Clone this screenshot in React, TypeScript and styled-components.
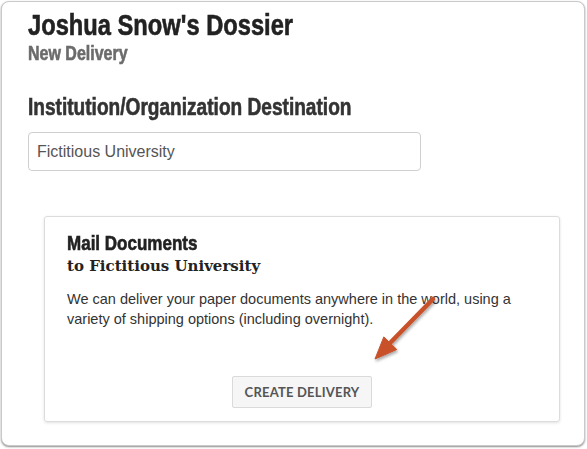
import styled, { createGlobalStyle } from "styled-components";

const Global = createGlobalStyle`
  html, body {
    margin: 0;
    padding: 0;
    background: #ffffff;
  }
  * {
    box-sizing: border-box;
  }
`;

// no condensed gothic installed, so squeeze a bold grotesque
const condensed = `"Liberation Sans", Arial, sans-serif`;

const Page = styled.div`
  padding: 1px 2px 3px 1px;
`;

const Panel = styled.div`
  height: 445px;
  border: 1px solid #c9c9c9;
  border-radius: 8px;
  box-shadow: 0 1px 2px rgba(0, 0, 0, 0.45);
  background: #fff;
  padding: 6px 26px 0 26px;
`;

const Squeezed = styled.div<{ $scale?: number }>`
  font-family: ${condensed};
  font-weight: 700;
  -webkit-text-stroke: 0.6px currentColor;
  transform: scaleX(${(p) => p.$scale ?? 0.8});
  transform-origin: left center;
  white-space: nowrap;
`;

const Title = styled(Squeezed).attrs({ as: "h1" })`
  margin: 0;
  font-size: 30px;
  line-height: 34px;
  color: #222;
`;

const Subtitle = styled(Squeezed).attrs({ as: "h2" })`
  margin: 0;
  font-size: 20px;
  line-height: 22px;
  color: #6b6b6b;
`;

const Label = styled(Squeezed).attrs({ as: "h3" })`
  margin: 30px 0 0;
  font-size: 23px;
  line-height: 26px;
  color: #333;
`;

const Input = styled.input`
  display: block;
  margin-top: 12px;
  width: 393px;
  height: 39px;
  padding: 0 8px;
  border: 1px solid #cfcfcf;
  border-radius: 4px;
  font-family: "Liberation Sans", Arial, sans-serif;
  font-size: 16px;
  color: #555;
  background: #fff;
  outline: none;
`;

const Card = styled.div`
  position: relative;
  margin: 45px 0 0 16px;
  width: 516px;
  height: 206px;
  border: 1px solid #dcdcdc;
  border-radius: 3px;
  box-shadow: 0 1px 3px rgba(0, 0, 0, 0.12);
  padding: 14px 22px 0 22px;
  display: flex;
  flex-direction: column;
`;

const CardTitle = styled(Squeezed)`
  font-size: 21px;
  line-height: 24px;
  color: #222;
`;

const CardSub = styled.div`
  font-family: "DejaVu Serif", "Liberation Serif", serif;
  font-weight: 700;
  font-size: 15px;
  line-height: 22px;
  color: #222;
`;

const Body = styled.p`
  margin: 12px 0 0;
  font-family: "Liberation Sans", Arial, sans-serif;
  font-size: 14.5px;
  line-height: 20px;
  color: #333;
`;

const Actions = styled.div`
  margin-top: auto;
  padding-bottom: 13px;
  display: flex;
  justify-content: center;
`;

const Button = styled.button`
  width: 140px;
  height: 32px;
  border: 1px solid #dadada;
  border-radius: 2px;
  background: #f6f6f6;
  font-family: Lato, "Open Sans", sans-serif;
  font-weight: 700;
  font-size: 13px;
  letter-spacing: 0.2px;
  color: #555;
  text-transform: uppercase;
  padding: 0;
`;

const Arrow = styled.svg`
  position: absolute;
  left: 321px;
  top: 76px;
  overflow: visible;
`;

const App = () => {
  return (
    <Page>
      <Global />
      <Panel>
        <Title $scale={0.79}>Joshua Snow's Dossier</Title>
        <Subtitle $scale={0.8}>New Delivery</Subtitle>
        <Label $scale={0.83}>Institution/Organization Destination</Label>
        <Input type="text" defaultValue="Fictitious University" />
        <Card>
          <CardTitle $scale={0.81}>Mail Documents</CardTitle>
          <CardSub>to Fictitious University</CardSub>
          <Body>
            We can deliver your paper documents anywhere in the world, using a
            variety of shipping options (including overnight).
          </Body>
          <Actions>
            <Button>Create Delivery</Button>
          </Actions>
          <Arrow width="80" height="80" viewBox="0 0 80 80">
            <defs>
              <filter id="sh" x="-30%" y="-30%" width="160%" height="160%">
                <feDropShadow dx="1" dy="2" stdDeviation="1.5" floodColor="#000" floodOpacity="0.35" />
              </filter>
            </defs>
            <g filter="url(#sh)" fill="#c8512b" stroke="#c8512b">
              <line x1="67" y1="6" x2="25" y2="49" strokeWidth="4.5" strokeLinecap="round" />
              <polygon points="9,66 17.8,43.9 30.8,56.5" strokeWidth="1" strokeLinejoin="round" />
            </g>
          </Arrow>
        </Card>
      </Panel>
    </Page>
  );
};

export default App;
